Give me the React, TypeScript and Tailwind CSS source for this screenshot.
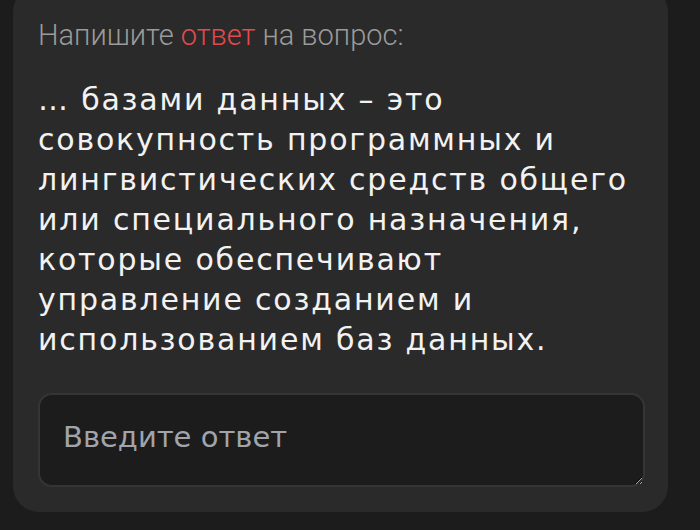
import React, { useState } from 'react';

const lines = [
  '… базами данных – это',
  'совокупность программных и',
  'лингвистических средств общего',
  'или специального назначения,',
  'которые обеспечивают',
  'управление созданием и',
  'использованием баз данных.',
];

const App: React.FC = () => {
  const [answer, setAnswer] = useState('');

  return (
    <div className="w-[700px] h-[530px] bg-[#1c1c1d] overflow-hidden">
      <div className="ml-[13px] w-[655px] -mt-[14px] pt-[34px] pb-[25px] pl-[25px] pr-[23px] bg-[#2a2a2a] rounded-[26px]">
        <p className="text-[29px] leading-[30px] font-light text-[#9b9b9b] font-['Roboto',sans-serif]">
          Напишите <span className="text-[#e24a4f]">ответ</span> на вопрос:
        </p>

        <p className="mt-[30px] text-[30px] leading-[40px] tracking-[1.8px] text-[#f2f2f2] font-['DejaVu_Sans',sans-serif] whitespace-nowrap">
          {lines.map((l, i) => (
            <React.Fragment key={i}>
              {l}
              {i < lines.length - 1 && <br />}
            </React.Fragment>
          ))}
        </p>

        <textarea
          value={answer}
          onChange={e => setAnswer(e.target.value)}
          placeholder="Введите ответ"
          className="mt-[33px] block w-full h-[94px] bg-[#1c1c1d] border-2 border-[#353535] rounded-[14px] px-[23px] py-[24px] text-[29px] leading-[36px] text-[#e6e6e6] placeholder:text-[#a0a4ab] font-['DejaVu_Sans',sans-serif] outline-none"
        />
      </div>
    </div>
  );
};

export default App;
